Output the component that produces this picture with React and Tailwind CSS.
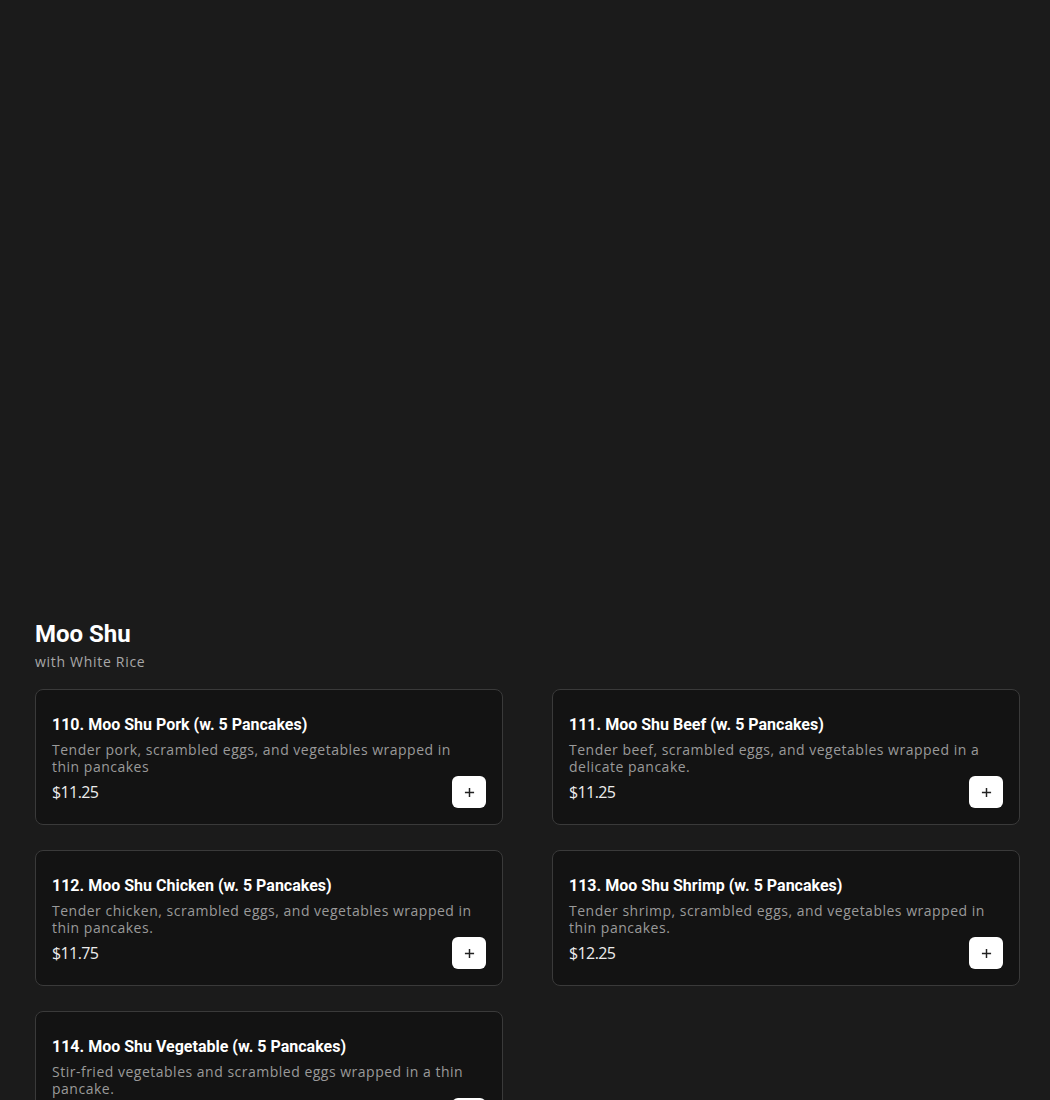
import React from 'react';

const items = [
  {
    id: 110,
    name: 'Moo Shu Pork (w. 5 Pancakes)',
    desc: 'Tender pork, scrambled eggs, and vegetables wrapped in thin pancakes',
    price: '$11.25',
  },
  {
    id: 111,
    name: 'Moo Shu Beef (w. 5 Pancakes)',
    desc: 'Tender beef, scrambled eggs, and vegetables wrapped in a delicate pancake.',
    price: '$11.25',
  },
  {
    id: 112,
    name: 'Moo Shu Chicken (w. 5 Pancakes)',
    desc: 'Tender chicken, scrambled eggs, and vegetables wrapped in thin pancakes.',
    price: '$11.75',
  },
  {
    id: 113,
    name: 'Moo Shu Shrimp (w. 5 Pancakes)',
    desc: 'Tender shrimp, scrambled eggs, and vegetables wrapped in thin pancakes.',
    price: '$12.25',
  },
  {
    id: 114,
    name: 'Moo Shu Vegetable (w. 5 Pancakes)',
    desc: 'Stir-fried vegetables and scrambled eggs wrapped in a thin pancake.',
    price: '$10.75',
  },
];

const body = { fontFamily: '"Open Sans", "Liberation Sans", sans-serif' };
const head = { fontFamily: 'Roboto, "Liberation Sans", sans-serif' };

// Single menu card
const MenuCard = ({ item }) => (
  <div className="flex flex-col rounded-lg border border-[#3a3a3a] bg-[#131313] px-4 pt-[23px] pb-4">
    <h3 className="text-[16px] font-bold leading-6 text-white" style={head}>
      {item.id}. {item.name}
    </h3>
    <p className="mt-[4px] pr-2 text-[14px] leading-[17px] tracking-[0.5px] text-[#9a9a9a]" style={body}>
      {item.desc}
    </p>
    <div className="mt-[1px] flex items-center justify-between">
      <span className="text-[16px] leading-6 tracking-[-0.6px] text-[#ececec]" style={body}>
        {item.price}
      </span>
      <button className="flex h-8 w-[34px] items-center justify-center rounded-md bg-white text-[#222]">
        <svg width="11" height="11" viewBox="0 0 12 12" fill="none" stroke="currentColor" strokeWidth="1.6">
          <path d="M6 1v10M1 6h10" />
        </svg>
      </button>
    </div>
  </div>
);

export default function App() {
  return (
    <div className="min-h-[1100px] bg-[#1b1b1b] pl-[35px] pr-[30px] pt-[618px]">
      <section>
        <h2 className="text-[24px] font-bold leading-8 text-white" style={head}>
          Moo Shu
        </h2>
        <p className="mt-[2px] text-[14px] leading-5 tracking-[0.7px] text-[#a8a8a8]" style={body}>
          with White Rice
        </p>
        <div className="mt-[17px] grid grid-cols-2 gap-x-[49px] gap-y-[25px]">
          {items.map((item) => (
            <MenuCard key={item.id} item={item} />
          ))}
        </div>
      </section>
    </div>
  );
}
